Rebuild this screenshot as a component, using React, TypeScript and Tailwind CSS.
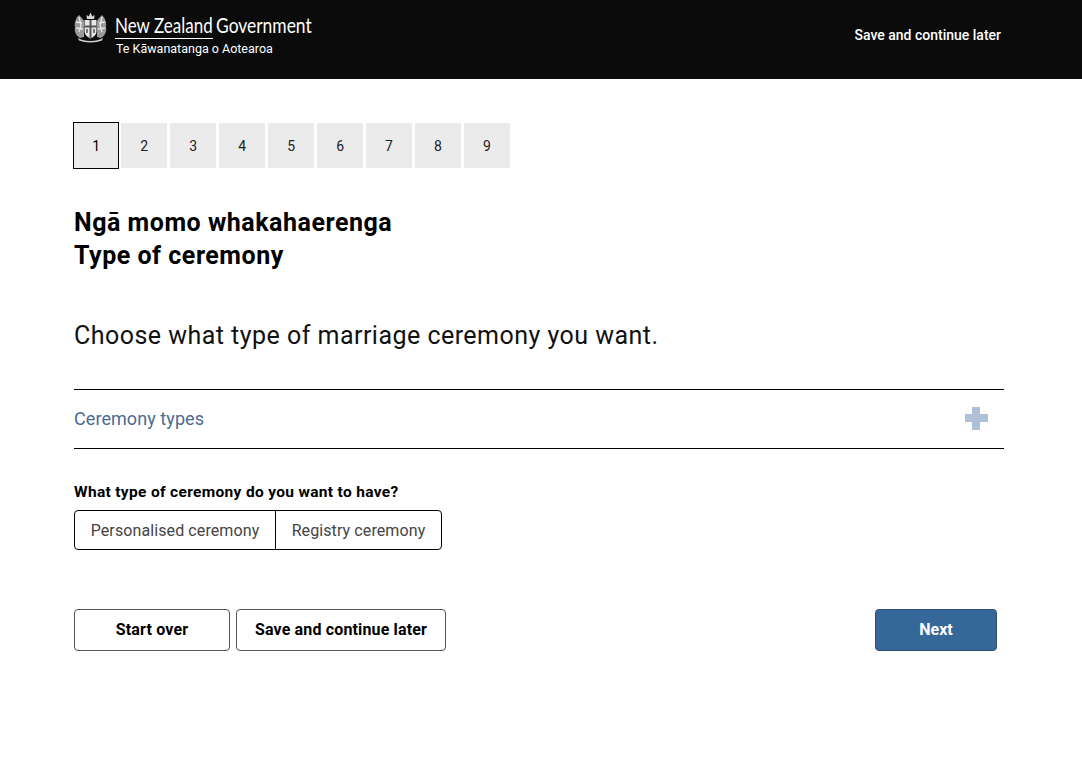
const steps = [1, 2, 3, 4, 5, 6, 7, 8, 9];

function Crest() {
  return (
    <svg width="33" height="31" viewBox="0 0 33 31" className="shrink-0" aria-hidden="true">
      {/* crown */}
      <path d="M13 7 L12.5 3 L14.8 4.5 L16.5 0.5 L18.2 4.5 L20.5 3 L20 7 Z" fill="#d9d9d9" />
      {/* left figure */}
      <path d="M5 3 C2 6 0 11 1 15 C0 19 2 24 6 26 L10 25 L10 9 C9 7 7 5 5 3 Z" fill="#9a9a9a" />
      <path d="M5 5 L7 13 L5 20 M2 10 L8 11 M2 16 L9 17" stroke="#e8e8e8" strokeWidth="1.3" fill="none" />
      {/* right figure */}
      <path d="M28 3 C31 6 33 11 32 15 C33 19 31 24 27 26 L23 25 L23 9 C24 7 26 5 28 3 Z" fill="#9a9a9a" />
      <path d="M28 5 L26 13 L28 20 M31 10 L25 11 M31 16 L24 17" stroke="#e8e8e8" strokeWidth="1.3" fill="none" />
      {/* shield */}
      <path d="M10.5 8 H22.5 V19 C22.5 23 19.5 25 16.5 26.5 C13.5 25 10.5 23 10.5 19 Z" fill="#e6e6e6" />
      <path d="M15.5 8 H17.5 V26 H15.5 Z M10.5 13.5 H22.5 V15.5 H10.5 Z" fill="#555" />
      <path d="M12 17 H14 V21 H12 Z M19 17 H21 V21 H19 Z" fill="#777" />
      {/* scroll */}
      <path d="M4 26 C10 30 23 30 29 26 L28 28.5 C22 31 11 31 5 28.5 Z" fill="#cfcfcf" />
    </svg>
  );
}

export default function App() {
  return (
    <div className="min-h-[761px] bg-white font-['Roboto',sans-serif] text-black">
      <header className="flex h-[79px] items-start justify-between bg-[#0b0b0b] pl-[74px] pr-[81px]">
        <div className="flex items-start gap-[8px] pt-[12px]">
          <Crest />
          <div className="flex flex-col text-white">
            <div className="flex font-['Lato',sans-serif] text-[21px] leading-[26px]">
              <div className="mr-[3px] w-[98px] border-b border-white">
                <span className="block origin-left scale-x-[0.81] whitespace-nowrap">New Zealand</span>
              </div>
              <span className="block w-[97px] origin-left scale-x-[0.83] whitespace-nowrap">Government</span>
            </div>
            <span className="mt-[1px] ml-[1px] text-[12.5px] leading-[18px]">Te Kāwanatanga o Aotearoa</span>
          </div>
        </div>
        <a href="#" className="pt-[25px] text-[14px] leading-[20px] font-medium text-white">
          Save and continue later
        </a>
      </header>

      <main className="pl-[74px] pr-[78px]">
        <ol className="flex gap-[2.7px] pt-[44px]">
          {steps.map((n) => (
            <li
              key={n}
              className={
                n === 1
                  ? "flex h-[45px] w-[44.3px] items-center justify-center bg-[#ebebeb] pt-[1px] text-[14px] outline outline-1 outline-black"
                  : "flex h-[45px] w-[46.3px] items-center justify-center bg-[#ebebeb] pt-[1px] text-[14px] text-[#222]"
              }
            >
              {n}
            </li>
          ))}
        </ol>

        <h1 className="mt-[38px] text-[25px] leading-[33px] font-bold tracking-[0.52px]">
          Ngā momo whakahaerenga
          <br />
          Type of ceremony
        </h1>

        <p className="mt-[46px] text-[25px] leading-[36px] tracking-[0.47px] text-[#111]">
          Choose what type of marriage ceremony you want.
        </p>

        <div className="mt-[35px] flex h-[60px] items-center justify-between border-y border-black">
          <span className="mb-[2px] text-[18px] tracking-[0.07px] text-[#4a6a94]">Ceremony types</span>
          <svg width="24" height="24" viewBox="0 0 24 24" className="mr-[16px] mb-[2px]" aria-hidden="true">
            <path d="M8 1 H16 V8 H24 V16 H16 V24 H8 V16 H1 V8 H8 Z" fill="#aec1d7" />
          </svg>
        </div>

        <p className="mt-[32px] text-[15.5px] leading-[22px] font-bold tracking-[0.33px]">
          What type of ceremony do you want to have?
        </p>

        <div className="mt-[7px] flex h-[40px] w-[368px] rounded-[4px] border border-black text-[16px] tracking-[0.1px] text-[#444]">
          <button className="w-[201px] border-r border-black pt-[1px]">Personalised ceremony</button>
          <button className="flex-1 pt-[1px]">Registry ceremony</button>
        </div>

        <div className="mt-[59px] flex items-start justify-between pr-[7px]">
          <div className="flex gap-[6px] tracking-[0.15px]">
            <button className="h-[42px] w-[156px] rounded-[4px] border border-[#555] bg-white text-[16px] font-bold">
              Start over
            </button>
            <button className="h-[42px] w-[210px] rounded-[4px] border border-[#555] bg-white text-[16px] font-bold">
              Save and continue later
            </button>
          </div>
          <button className="h-[42px] w-[122px] rounded-[4px] border border-[#2f4f73] bg-[#366799] text-[16px] font-bold text-white">
            Next
          </button>
        </div>
      </main>
    </div>
  );
}
